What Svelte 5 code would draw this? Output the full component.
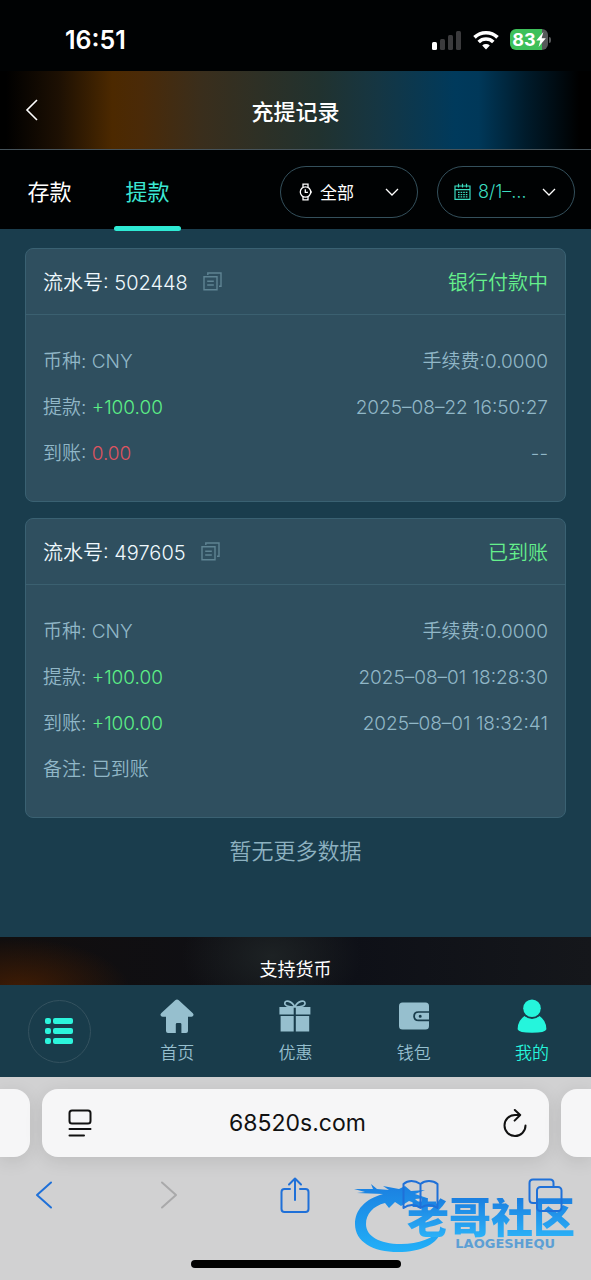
<script>
    let tab = $state("提款");
    let page = $state("我的");

    const tabs = ["存款", "提款"];

    const records = [
        {
            id: "502448",
            status: "银行付款中",
            rows: [
                { label: "币种", value: "CNY", right: "手续费:0.0000" },
                { label: "提款", value: "+100.00", tone: "up", right: "2025–08–22 16:50:27" },
                { label: "到账", value: "0.00", tone: "down", right: "--" },
            ],
        },
        {
            id: "497605",
            status: "已到账",
            rows: [
                { label: "币种", value: "CNY", right: "手续费:0.0000" },
                { label: "提款", value: "+100.00", tone: "up", right: "2025–08–01 18:28:30" },
                { label: "到账", value: "+100.00", tone: "up", right: "2025–08–01 18:32:41" },
                { label: "备注", value: "已到账" },
            ],
        },
    ];

    const links = ["首页", "优惠", "钱包", "我的"];
</script>

<div class="app">
    <div class="status-bar">
        <span class="clock">16:51</span>
        <div class="indicators">
            <svg width="30" height="20" viewBox="0 0 30 20">
                <rect x="0" y="12" width="5" height="8" rx="1.5" fill="#fff" />
                <rect x="8" y="9" width="5" height="11" rx="1.5" fill="#3b3b3d" />
                <rect x="16" y="5" width="5" height="15" rx="1.5" fill="#3b3b3d" />
                <rect x="24" y="1" width="5" height="19" rx="1.5" fill="#3b3b3d" />
            </svg>
            <svg width="26" height="20" viewBox="0 0 26 20" fill="none" stroke="#fff" stroke-width="3.6">
                <path d="M1.5 7.4a16.5 16.5 0 0 1 23 0" />
                <path d="M5.7 12a10.5 10.5 0 0 1 14.6 0" />
                <path d="M13 19.4l-3.8-3.9a5.6 5.6 0 0 1 7.6 0z" fill="#fff" stroke="none" />
            </svg>
            <div class="battery">
                <span>83</span>
                <svg width="10" height="15" viewBox="0 0 10 15"><path d="M7.4 0L.3 8.4h4L2.6 15 9.8 6.3H5.6z" fill="#fff" /></svg>
            </div>
        </div>
    </div>

    <header>
        <button class="back" aria-label="返回">
            <svg width="14" height="24" viewBox="0 0 14 24" fill="none" stroke="#fff" stroke-width="1.6">
                <path d="M12 2L2 12l10 10" />
            </svg>
        </button>
        <h1>充提记录</h1>
    </header>

    <div class="toolbar">
        <div class="tabs">
            {#each tabs as name}
                <button class="tab" class:active={tab === name} onclick={() => (tab = name)}>{name}</button>
            {/each}
        </div>
        <div class="filters">
            <button class="filter">
                <svg width="14" height="18" viewBox="0 0 14 18" fill="none" stroke="#fff" stroke-width="1.3">
                    <circle cx="6.5" cy="9" r="5.2" />
                    <path d="M4 4.4V1.2h5v3.2M4 13.6v3.2h5v-3.2M6.3 6.2v3.2h2.6M12 7.8v2.4" />
                </svg>
                <span>全部</span>
                <svg class="caret" width="14" height="8" viewBox="0 0 14 8" fill="none" stroke="#fff" stroke-width="1.3">
                    <path d="M1 1l6 6 6-6" />
                </svg>
            </button>
            <button class="filter date">
                <svg width="17" height="18" viewBox="0 0 17 18" fill="none" stroke="currentColor" stroke-width="1.2">
                    <path d="M1 3h15v13.4H1zM1 6.6h15M4.5.8v3.6M8.5.8v3.6M12.5.8v3.6" />
                    <path d="M4 9.3h9.6M4 11.6h9.6M4 13.9h9.6" stroke-width="1.2" stroke-dasharray="1.6 1" />
                </svg>
                <span>8/1–…</span>
                <svg class="caret" width="14" height="8" viewBox="0 0 14 8" fill="none" stroke="#fff" stroke-width="1.3">
                    <path d="M1 1l6 6 6-6" />
                </svg>
            </button>
        </div>
    </div>

    <main>
        {#each records as record}
            <article class="card">
                <div class="card-head">
                    <h2>流水号: {record.id}</h2>
                    <button class="copy" aria-label="复制">
                        <svg width="19" height="19" viewBox="0 0 19 19" fill="none" stroke="#5f8493" stroke-width="1.4">
                            <path d="M1 4.8h13v13H1zM4.800 3V1H18v13.200h-2M4.200 9.200h6.600M4.200 13h6.600" />
                        </svg>
                    </button>
                    <span class="state">{record.status}</span>
                </div>
                <div class="card-body">
                    {#each record.rows as row}
                        <div class="row">
                            <span>{row.label}: <span class={row.tone}>{row.value}</span></span>
                            {#if row.right}
                                <span>{row.right}</span>
                            {/if}
                        </div>
                    {/each}
                </div>
            </article>
        {/each}
        <p class="end">暂无更多数据</p>
    </main>

    <section class="support">支持货币</section>

    <nav>
        <div class="nav-item">
            <button class="menu" aria-label="菜单">
                <svg width="28" height="26" viewBox="0 0 28 26" fill="#2cf5dc">
                    <rect x="0" y="0" width="6" height="6" rx="2" />
                    <rect x="8" y="0" width="20" height="6" rx="2" />
                    <rect x="0" y="10" width="6" height="6" rx="2" />
                    <rect x="8" y="10" width="20" height="6" rx="2" />
                    <rect x="0" y="20" width="6" height="6" rx="2" />
                    <rect x="8" y="20" width="20" height="6" rx="2" />
                </svg>
            </button>
        </div>
        {#each links as name}
            <a href="#{name}" class="nav-item" class:current={page === name} onclick={() => (page = name)}>
                <svg width="34" height="34" viewBox="0 0 34 34" fill="currentColor">
                    {#if name === "首页"}
                        <path d="M15.2 1.2q1.8-1.5 3.6 0L32.6 14q1.6 1.6.5 2.8-.5.9-1.8.9H28v14.2q0 2-2 2h-4.6v-8.6q0-1.3-1.3-1.3h-3q-1.3 0-1.3 1.3v8.6H8q-2 0-2-2V17.7H2.7q-1.3 0-1.8-.9-1.1-1.2.5-2.8z" />
                    {:else if name === "优惠"}
                        <path d="M1.4 8h14.3v7.6H1.4zM17.8 8h14.6v7.6H17.8zM2.6 17h13.1v15.6H2.6zM17.8 17h13.4v15.6H17.8z" />
                        <path d="M16.8 8C13.5 1.5 7.5.8 6.8 4c-.5 2.5 3 4 10 4zM16.8 8c3.3-6.5 9.5-7.2 10.200-4 .5 2.500-3 4-10.200 4z" fill="none" stroke="currentColor" stroke-width="1.6" />
                    {:else if name === "钱包"}
                        <path d="M5.5 3.5h23q3.500 0 3.500 3.500v5.200H21.500q-5.300 0-5.300 5t5.300 5H32v4.800q0 3.500-3.500 3.500h-23Q2 30.500 2 27V7q0-3.500 3.500-3.500z" />
                        <path d="M32 13.800H21.800q-3.800 0-3.800 3.400t3.800 3.400H32zM23.200 15.700a1.500 1.500 0 1 1 0 3 1.500 1.500 0 0 1 0-3z" fill-rule="evenodd" />
                    {:else}
                        <circle cx="17" cy="9.2" r="8.8" />
                        <path d="M9.6 17q3.300 3 7.400 3t7.400-3q7 4.400 7 13.200-1 3.600-14.400 3.600T2.600 30.200q0-8.800 7-13.200z" />
                    {/if}
                </svg>
                <span>{name}</span>
            </a>
        {/each}
    </nav>

    <footer>
        <div class="address-row">
            <div class="side left"></div>
            <div class="address">
                <button aria-label="页面设置">
                    <svg width="24" height="28" viewBox="0 0 24 28" fill="none" stroke="#111" stroke-width="2" stroke-linecap="round">
                        <rect x="1.5" y="1.5" width="21" height="13" rx="2.5" />
                        <path d="M1.5 20h21M1.5 26.500h14.500" />
                    </svg>
                </button>
                <span>68520s.com</span>
                <button aria-label="刷新">
                    <svg width="24" height="28" viewBox="0 0 24 28" fill="none" stroke="#111" stroke-width="2" stroke-linecap="round" stroke-linejoin="round">
                        <path d="M17 6H12A10.500 10.500 0 1 0 22.500 16.500M11.800 1l5.400 5-5.600 5.600" />
                    </svg>
                </button>
            </div>
            <div class="side right"></div>
        </div>

        <div class="browser-tools">
            <button aria-label="后退">
                <svg width="18" height="28" viewBox="0 0 18 28"><path d="M16 1.5L2 14l14 12.5" /></svg>
            </button>
            <button aria-label="前进" class="disabled" disabled>
                <svg width="18" height="28" viewBox="0 0 18 28"><path d="M2 1.5L16 14 2 26.5" /></svg>
            </button>
            <button aria-label="分享">
                <svg width="30" height="36" viewBox="0 0 30 36"><path d="M10 12H4.5Q1.500 12 1.500 15v17q0 3 3 3h21q3 0 3-3V15q0-3-3-3H20M15 23V1.500M9 7.500l6-6 6 6" /></svg>
            </button>
            <button aria-label="书签">
                <svg width="37" height="30" viewBox="0 0 37 30"><path d="M18.5 4Q14 1 9.500 1T1.500 4v24q4-3 8.500-3t8.500 3q4-3 8.500-3t8.500 3V4Q32 1 27 1t-8.500 3zV28" /></svg>
            </button>
            <button aria-label="标签页">
                <svg width="35" height="34" viewBox="0 0 35 34"><path d="M9 25H5q-3.500 0-3.500-3.500V5Q1.500 1.500 5 1.500h17q3.500 0 3.500 3.500v4" /><rect x="9" y="9" width="24.5" height="24" rx="3.5" /></svg>
            </button>
        </div>

        <div class="home-bar"></div>

        <div class="brand">
            <svg width="90" height="70" viewBox="0 0 90 70">
                <defs>
                    <linearGradient id="ring" x1="0" y1="0" x2="0" y2="1">
                        <stop offset="0" stop-color="#1b7fe0" />
                        <stop offset="1" stop-color="#22b0f8" />
                    </linearGradient>
                </defs>
                <path d="M30 10C12 15 2 26 2 40c0 18 18 28 43 28 23 0 41-8 43-22-8 8-22 14-40 14-22 0-35-8-35-20 0-10 7-18 19-21l4 5 6-6 6 4 8-5 14 5-8-7 12-1-12-4 10-4-14 1-6-5-6 3-16-3 6 4-12-1-6-5 2 5-19 0 11 3-8 1z" fill="url(#ring)" />
            </svg>
            <div class="brand-text">
                <strong>老哥社区</strong>
                <small>LAOGESHEQU</small>
            </div>
        </div>
    </footer>
</div>

<style>
    :global(body) {
        margin: 0;
        background: #1a3d4d;
    }

    .app {
        min-height: 100vh;
        display: flex;
        flex-direction: column;
        font-family: Inter, "Noto Sans CJK SC", sans-serif;
        color: #fff;
        background: #1a3d4d;
    }

    button {
        display: flex;
        align-items: center;
        padding: 0;
        border: 0;
        background: none;
        color: inherit;
        font: inherit;
        cursor: pointer;
    }

    svg {
        flex: none;
    }

    .status-bar {
        display: flex;
        align-items: center;
        justify-content: space-between;
        height: 71px;
        padding: 8px 43px 0 65px;
        box-sizing: border-box;
        background: #000203;
    }

    .clock {
        font-size: 25px;
        font-weight: 600;
    }

    .indicators {
        display: flex;
        align-items: center;
        gap: 11px;
    }

    .battery {
        display: flex;
        align-items: center;
        justify-content: center;
        width: 38px;
        height: 21px;
        border-radius: 6px;
        background: linear-gradient(90deg, #3dc05a 83%, #56585a 83%);
        font-size: 18px;
        font-weight: 700;
        position: relative;
    }

    .battery::after {
        content: "";
        position: absolute;
        right: -3px;
        width: 2px;
        height: 6px;
        border-radius: 0 2px 2px 0;
        background: #56585a;
    }

    header {
        display: grid;
        grid-template-columns: 60px 1fr 60px;
        align-items: center;
        height: 78px;
        border-bottom: 1px solid #46535a;
        background: linear-gradient(90deg, #000 1%, #1d1003 10%, #4c2900 19%, #4a2a08 24%, #3a2e1c 34%, #21322f 54%, #153643 64%, #003a5c 77%, #003859 81%, #001b2b 89%, #000 98%);
    }

    .back {
        padding-left: 25px;
    }

    h1 {
        margin: 0;
        font-size: 22px;
        font-weight: 500;
        text-align: center;
    }

    .toolbar {
        display: flex;
        justify-content: space-between;
        align-items: center;
        height: 79px;
        padding-right: 16px;
        background: #000203;
    }

    .tabs {
        display: flex;
        align-self: stretch;
        gap: 31px;
        padding-left: 16px;
    }

    .tab {
        justify-content: center;
        width: 67px;
        font-size: 22px;
        position: relative;
    }

    .tab.active {
        color: #3be8d4;
    }

    .tab.active::after {
        content: "";
        position: absolute;
        left: 0;
        right: 0;
        bottom: -2px;
        height: 5px;
        border-radius: 3px;
        background: #2eead4;
    }

    .filters {
        display: flex;
        gap: 19px;
        padding-top: 4px;
    }

    .filter {
        gap: 7px;
        width: 138px;
        height: 52px;
        padding: 0 18px;
        border: 1px solid #34505c;
        border-radius: 26px;
        box-sizing: border-box;
        font-size: 17px;
    }

    .filter.date {
        padding-left: 16px;
        color: #3bdcc0;
        font-size: 18px;
        font-weight: 300;
    }

    .caret {
        margin-left: auto;
    }

    main {
        flex: 1;
        display: flex;
        flex-direction: column;
        gap: 16px;
        padding: 19px 25px 0;
    }

    .card {
        border: 1px solid #3a6172;
        border-radius: 8px;
        background: #2f4f5f;
    }

    .card-head {
        display: flex;
        align-items: center;
        height: 65px;
        padding: 0 17px;
        border-bottom: 1px solid #3b6070;
        font-size: 20px;
        font-weight: 350;
    }

    h2 {
        margin: 0;
        font-size: 20px;
        font-weight: 350;
        color: #eff9fd;
    }

    .copy {
        margin-left: 15px;
    }

    .state {
        margin-left: auto;
        color: #65f08c;
    }

    .card-body {
        padding: 24px 17px;
    }

    .row {
        display: flex;
        justify-content: space-between;
        font-size: 19px;
        line-height: 46px;
        height: 46px;
        font-weight: 350;
        color: #91b7c7;
    }

    .up {
        color: #5cee86;
    }

    .down {
        color: #dd5460;
    }

    .end {
        margin: 0;
        font-size: 22px;
        line-height: 34px;
        font-weight: 350;
        text-align: center;
        color: #8db1c0;
    }

    .support {
        display: flex;
        align-items: flex-end;
        justify-content: center;
        height: 48px;
        font-size: 18px;
        line-height: 30px;
        background:
            radial-gradient(ellipse 110px 50px at 20px 52px, #401c04, transparent),
            radial-gradient(ellipse 90px 60px at 46% 40%, #1d2224, transparent),
            linear-gradient(90deg, #110e0e, #0e1017 60%, #15171b);
    }

    nav {
        display: grid;
        grid-template-columns: repeat(5, 1fr);
        height: 92px;
        background: #193c4b;
    }

    .nav-item {
        display: flex;
        flex-direction: column;
        align-items: center;
        justify-content: center;
        gap: 8px;
        font-size: 17px;
        line-height: 24px;
        font-weight: 350;
        text-decoration: none;
        color: #96bfce;
    }

    a.nav-item {
        padding-top: 2px;
    }

    .nav-item.current {
        color: #25f5dc;
    }

    .menu {
        justify-content: center;
        width: 63px;
        height: 63px;
        border: 1px solid #34525f;
        border-radius: 50%;
    }

    footer {
        display: flex;
        flex-direction: column;
        height: 203px;
        background: #d1d1d2;
        position: relative;
        overflow: hidden;
    }

    .address-row {
        display: flex;
        gap: 12px;
        height: 68px;
        padding-top: 12px;
    }

    .side,
    .address {
        background: #f6f6f7;
        box-shadow: 0 4px 18px rgba(0, 0, 0, 0.1);
    }

    .side {
        width: 30px;
    }

    .left {
        border-radius: 0 16px 16px 0;
    }

    .right {
        border-radius: 16px 0 0 16px;
    }

    .address {
        flex: 1;
        display: flex;
        align-items: center;
        justify-content: space-between;
        padding: 0 22px 0 26px;
        border-radius: 16px;
        color: #111;
        font-size: 23px;
    }

    .browser-tools {
        display: flex;
        align-items: center;
        justify-content: space-between;
        height: 76px;
        padding: 0 27px 0 25px;
        position: relative;
        z-index: 1;
    }

    .browser-tools button {
        justify-content: center;
        width: 37px;
        color: #1f70d8;
    }

    .browser-tools svg {
        fill: none;
        stroke: currentColor;
        stroke-width: 2;
        stroke-linecap: round;
        stroke-linejoin: round;
    }

    .browser-tools .disabled {
        color: #a9a9aa;
    }

    .home-bar {
        width: 210px;
        height: 8px;
        margin: 27px auto 0;
        border-radius: 4px;
        background: #000;
    }

    .brand {
        position: absolute;
        right: 16px;
        bottom: 26px;
        width: 222px;
        height: 70px;
        pointer-events: none;
    }

    .brand-text {
        position: absolute;
        right: 0;
        bottom: 4px;
        display: flex;
        flex-direction: column;
        align-items: flex-end;
    }

    strong {
        font-size: 42px;
        line-height: 40px;
        font-weight: 900;
        color: transparent;
        background: linear-gradient(#1b7fe0, #2bb2f8);
        background-clip: text;
    }

    small {
        margin-right: 20px;
        font-size: 13px;
        line-height: 12px;
        font-weight: 700;
        font-family: "DejaVu Sans", sans-serif;
        color: #5d9fd4;
    }
</style>
